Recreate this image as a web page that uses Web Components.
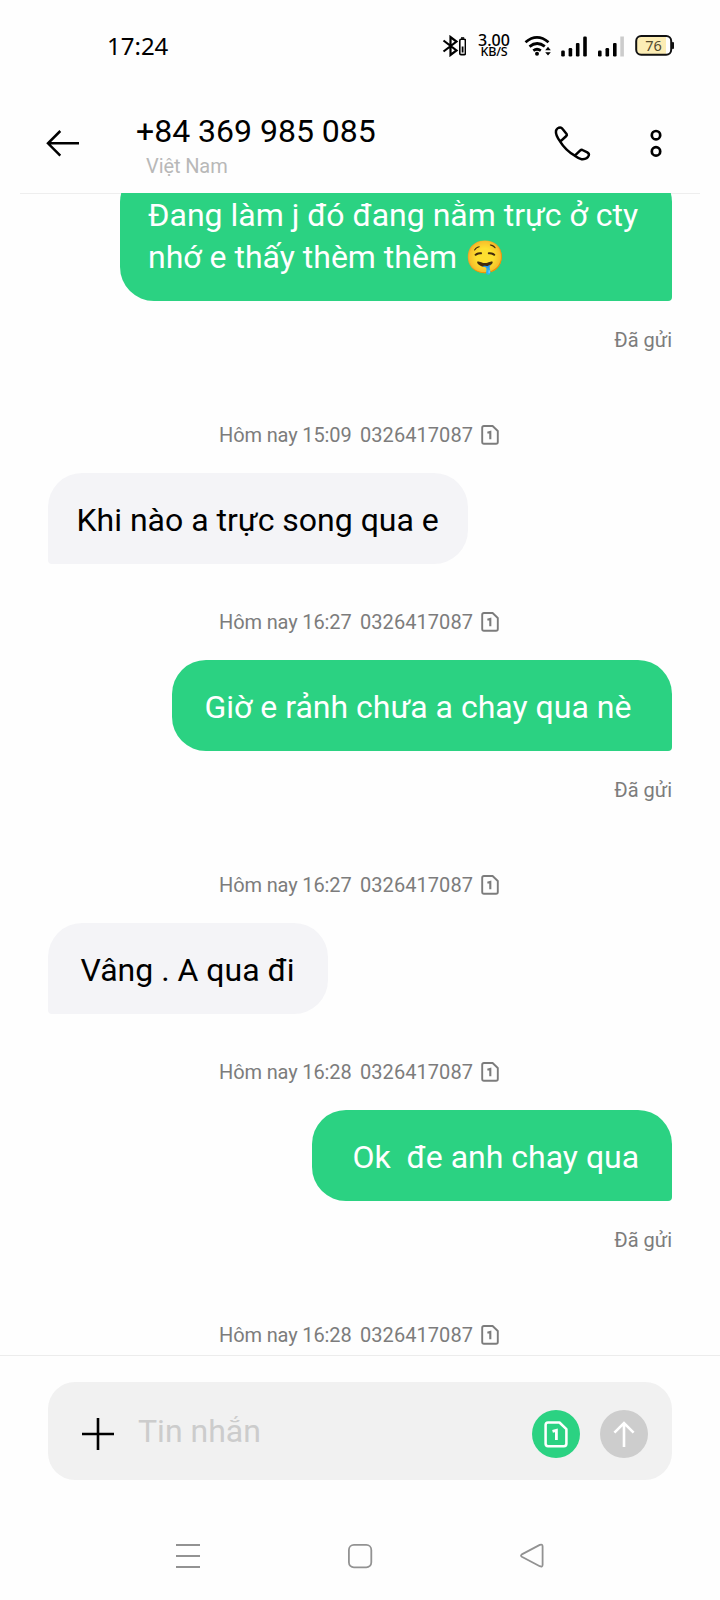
<!DOCTYPE html>
<html lang="vi">
<head>
<meta charset="utf-8">
<title>Tin nhắn</title>
<style>
body{margin:0;background:#fefefe;font-family:Roboto,"Noto Sans",sans-serif;color:#000}
</style>
</head>
<body>
<message-screen></message-screen>
<script>
const define = (name, html) => {
  const t = document.createElement('template');
  t.innerHTML = html;
  customElements.define(name, class extends HTMLElement {
    constructor() {
      super();
      this.attachShadow({ mode: 'open' }).appendChild(t.content.cloneNode(true));
    }
  });
};

define('sim-icon', `
<style>:host{display:block;width:18px;height:20px}svg{display:block;width:100%;height:100%}</style>
<svg viewBox="0 0 18 20" fill="none" stroke="currentColor" stroke-width="1.9" stroke-linejoin="round">
<path d="M3 1H11.6L16.8 6V17Q16.8 18.8 15 18.8H3Q1.2 18.8 1.2 17V2.8Q1.2 1 3 1Z"/>
<path d="M6.4 7.7L9.3 6.9V14.2" stroke-width="2.1" stroke-linejoin="miter"/></svg>`);

define('status-bar', `
<style>
:host{display:flex;box-sizing:border-box;height:92px;padding:0 46px 0 107px;align-items:center;font-family:"Noto Sans",sans-serif}
time{font-size:24px;line-height:32px;flex:1;margin-top:-1px}
svg{display:block;flex:none}
.net{width:36px;margin:0 12px 0 10px;text-align:center;font-weight:500;font-size:16px;line-height:12px;white-space:nowrap}
.net span{display:block}
.net .u{font-size:12.5px;line-height:12px;letter-spacing:-.2px}
.sig{margin-left:11px}
.bat{display:grid;margin:-1px 0 0 11px}
.bat>*{grid-area:1/1}
.bat span{width:37px;text-align:center;font-size:14.5px;line-height:20px;color:#554c2e}
</style>
<time>17:24</time>
<svg width="24" height="22" viewBox="443 35 24 22" fill="none" stroke="#000" stroke-width="2.2"><path d="M444.5 40.5L457.5 50.5L451.5 55V37L457.5 41.5L444.5 51.5"/><rect x="460.8" y="39.2" width="5.6" height="15.4" rx="1.2" stroke-width="1.6"/><path d="M462 38H465.2" stroke-width="1.6"/><path d="M463.6 46.5V52.5" stroke-width="1.8"/></svg>
<div class="net"><span>3.00</span><span class="u">KB/S</span></div>
<svg width="28" height="22" viewBox="523 35 28 22" fill="none" stroke="#000" stroke-width="2.8"><path d="M524.5 42.2Q536 32.6 547.5 42.2M528.5 46.6Q536 40.6 543.8 46.4M532.3 50.6Q536 48 539.8 50.6"/><circle cx="536" cy="53.8" r="2" fill="#000" stroke="none"/><path d="M544.2 50.2L547 46.8L549.8 50.2ZM544.2 52.2L547 55.6L549.8 52.2Z" fill="#000" stroke="none"/></svg>
<svg class="sig" style="margin-left:9px" width="26" height="21" viewBox="560.5 35.5 26 21" fill="#000"><rect x="560.7" y="50" width="3.6" height="6" rx="1.2"/><rect x="568.1" y="47.6" width="3.6" height="8.4" rx="1.2"/><rect x="575.4" y="42.4" width="3.6" height="13.6" rx="1.2"/><rect x="582.7" y="36" width="3.6" height="20" rx="1.2"/></svg>
<svg class="sig" width="26" height="21" viewBox="598 35.5 26 21" fill="#000"><rect x="598" y="50" width="3.6" height="6" rx="1.2"/><rect x="605.5" y="47.6" width="3.6" height="8.4" rx="1.2"/><rect x="613" y="42.4" width="3.6" height="13.6" rx="1.2"/><rect x="620.3" y="36" width="3.6" height="20" fill="#ccc"/></svg>
<div class="bat"><svg width="39" height="21" viewBox="635 35.5 39 21"><rect x="636.2" y="36.6" width="35" height="18.6" rx="5" fill="#fff"/><path d="M641 37.5H666V54.5H641Q637 54.5 637 50V42Q637 37.5 641 37.5Z" fill="#fcedb5"/><rect x="636.2" y="36.6" width="35" height="18.6" rx="5" fill="none" stroke="#111" stroke-width="2"/><rect x="671.8" y="42.5" width="2.2" height="7" rx="1" fill="#111"/></svg><span>76</span></div>`);

define('chat-header', `
<style>
:host{display:block;height:102px;position:relative}
.row{display:flex;height:101px;box-sizing:border-box;padding:20px 57px 0 46px;align-items:flex-start}
.line{height:1px;margin:0 20px;background:#eee}
svg{display:block;flex:none}
.who{flex:1;padding-left:56px;white-space:nowrap}
.num{font-size:32px;line-height:38px}
.sub{font-size:20px;line-height:24px;margin:4px 0 0 10px;color:#b8b8b8;letter-spacing:-.1px}
</style>
<div class="row">
<svg style="margin-top:17px" width="34" height="28" viewBox="46 129 34 28" fill="none" stroke="#000" stroke-width="2.5"><path d="M79 143.3H48M60.3 131L48 143.3L60.3 155.6"/></svg>
<div class="who"><div class="num"><slot name="number"></slot></div><div class="sub"><slot name="place"></slot></div></div>
<svg style="margin:12px 57px 0 0" width="40" height="40" viewBox="552 124 40 40" fill="none" stroke="#000" stroke-width="2.5" stroke-linejoin="round"><path d="M560.2 141.6C557.5 138 555.6 133.2 556 130.8C556.3 129 558.5 127.6 560.2 127.6C561.1 127.6 561.8 128 562.4 128.8L566.6 134Q567.3 135.1 566.3 136L560.2 141.6C564 147.8 568.2 151.8 574.8 155.7L580.3 150.4Q581.2 149.6 582.4 150L587.3 152.4C588.7 153.2 589.2 154.2 588.8 155.4C587.8 158 584.8 159.5 581.6 159.2C579.2 158.8 577 157.3 574.8 155.7"/></svg>
<svg style="margin-top:16px" width="14" height="30" viewBox="649 128 14 30" fill="none" stroke="#000" stroke-width="2.7"><circle cx="656" cy="135.2" r="4.2"/><circle cx="656" cy="151.4" r="4.2"/></svg>
</div><div class="line"></div>`);

define('time-stamp', `
<style>
:host{display:flex;height:24px;margin-bottom:26px;padding-left:219px;align-items:center;font-size:20px;line-height:24px;color:#7c7c7c;white-space:nowrap}
.w{width:141px;letter-spacing:-.13px}.n{width:120.5px;letter-spacing:.06px}
</style>
<span class="w"><slot></slot></span><span class="n">0326417087</span><sim-icon></sim-icon>`);

define('chat-bubble', `
<style>
:host{display:block;box-sizing:border-box;flex:none;padding:26px 0 23px var(--pad);width:var(--w);font-size:32px;line-height:42px}
:host([kind=in]){align-self:flex-start;margin:0 0 46px 48px;background:#f4f4f7;border-radius:34px 34px 34px 4px}
:host([kind=out]){align-self:flex-end;margin:0 48px 27px 0;background:#2bd282;color:#fff;border-radius:34px 34px 4px 34px}
slot{display:block;white-space:pre}
</style><slot></slot>`);

define('sent-note', `
<style>:host{display:block;text-align:right;margin:0 48px 71px 0;height:24px;font-size:20px;line-height:24px;color:#7c7c7c}</style><slot></slot>`);

define('chat-list', `
<style>
:host{display:flex;flex-direction:column;justify-content:flex-end;box-sizing:border-box;height:1162px;margin-top:-1px;overflow:hidden;position:relative}
::slotted(*){flex-shrink:0}
::slotted(:last-child){margin-bottom:8px!important}
</style><slot></slot>`);

define('message-composer', `
<style>
:host{display:block;border-top:1px solid #ececec;padding:26px 48px 0}
.box{display:flex;align-items:center;height:98px;box-sizing:border-box;padding:6px 24px 0 33px;background:#f1f1f1;border-radius:27px}
svg{display:block;flex:none}
.hint{flex:1;padding-left:23px;margin-top:-6px;font-size:32px;line-height:42px;color:#ccc}
.btn{display:grid;place-items:center;width:48px;height:48px;border-radius:50%;color:#fff}
.sim{background:#2bd282;margin-right:20px}.sim sim-icon{width:24px;height:27px}
.send{background:#cdcdcd}
</style>
<div class="box">
<svg width="34" height="34" viewBox="0 0 34 34" stroke="#000" stroke-width="2.6"><path d="M1 17H33M17 1V33"/></svg>
<div class="hint"><slot></slot></div>
<div class="btn sim"><sim-icon></sim-icon></div>
<div class="btn send"><svg width="24" height="28" viewBox="0 0 24 28" fill="none" stroke="#fff" stroke-width="2.6"><path d="M12 27V3M2.4 12.6L12 3L21.6 12.6"/></svg></div>
</div>`);

define('nav-bar', `
<style>:host{display:flex;justify-content:space-between;padding:63px 175px 0 175px}svg{display:block}</style>
<svg width="26" height="26" viewBox="175 1543 26 26" stroke="#929292" stroke-width="2"><path d="M176 1545H200M176 1556H200M176 1567H200"/></svg>
<svg width="26" height="26" viewBox="347 1543 26 26" fill="none" stroke="#929292" stroke-width="1.8"><rect x="348.9" y="1544.9" width="22.4" height="22.4" rx="5"/></svg>
<svg width="26" height="26" viewBox="519 1543 26 26" fill="none" stroke="#929292" stroke-width="1.8" stroke-linejoin="round"><path d="M521.8 1554.4L539.8 1544.9Q542.6 1543.8 542.6 1546.6V1564.8Q542.6 1567.4 539.8 1566.2L521.8 1556.8Q520.2 1555.6 521.8 1554.4Z"/></svg>`);

define('message-screen', `
<style>:host{display:block;width:720px;height:1600px;overflow:hidden}</style>
<status-bar></status-bar>
<chat-header><span slot="number">+84 369 985 085</span><span slot="place">Việt Nam</span></chat-header>
<chat-list>
<chat-bubble kind="out" style="--w:552px;--pad:28px">Đang làm j đó đang nằm trực ở cty
nhớ e thấy thèm thèm 🤤</chat-bubble>
<sent-note>Đã gửi</sent-note>
<time-stamp>Hôm nay 15:09</time-stamp>
<chat-bubble kind="in" style="--w:420px;--pad:28.5px">Khi nào a trực song qua e</chat-bubble>
<time-stamp>Hôm nay 16:27</time-stamp>
<chat-bubble kind="out" style="--w:500px;--pad:32.5px">Giờ e rảnh chưa a chay qua nè</chat-bubble>
<sent-note>Đã gửi</sent-note>
<time-stamp>Hôm nay 16:27</time-stamp>
<chat-bubble kind="in" style="--w:280px;--pad:32.5px">Vâng . A qua đi</chat-bubble>
<time-stamp>Hôm nay 16:28</time-stamp>
<chat-bubble kind="out" style="--w:360px;--pad:40.5px">Ok  đe anh chay qua</chat-bubble>
<sent-note>Đã gửi</sent-note>
<time-stamp>Hôm nay 16:28</time-stamp>
</chat-list>
<message-composer>Tin nhắn</message-composer>
<nav-bar></nav-bar>`);
</script>
</body>
</html>
